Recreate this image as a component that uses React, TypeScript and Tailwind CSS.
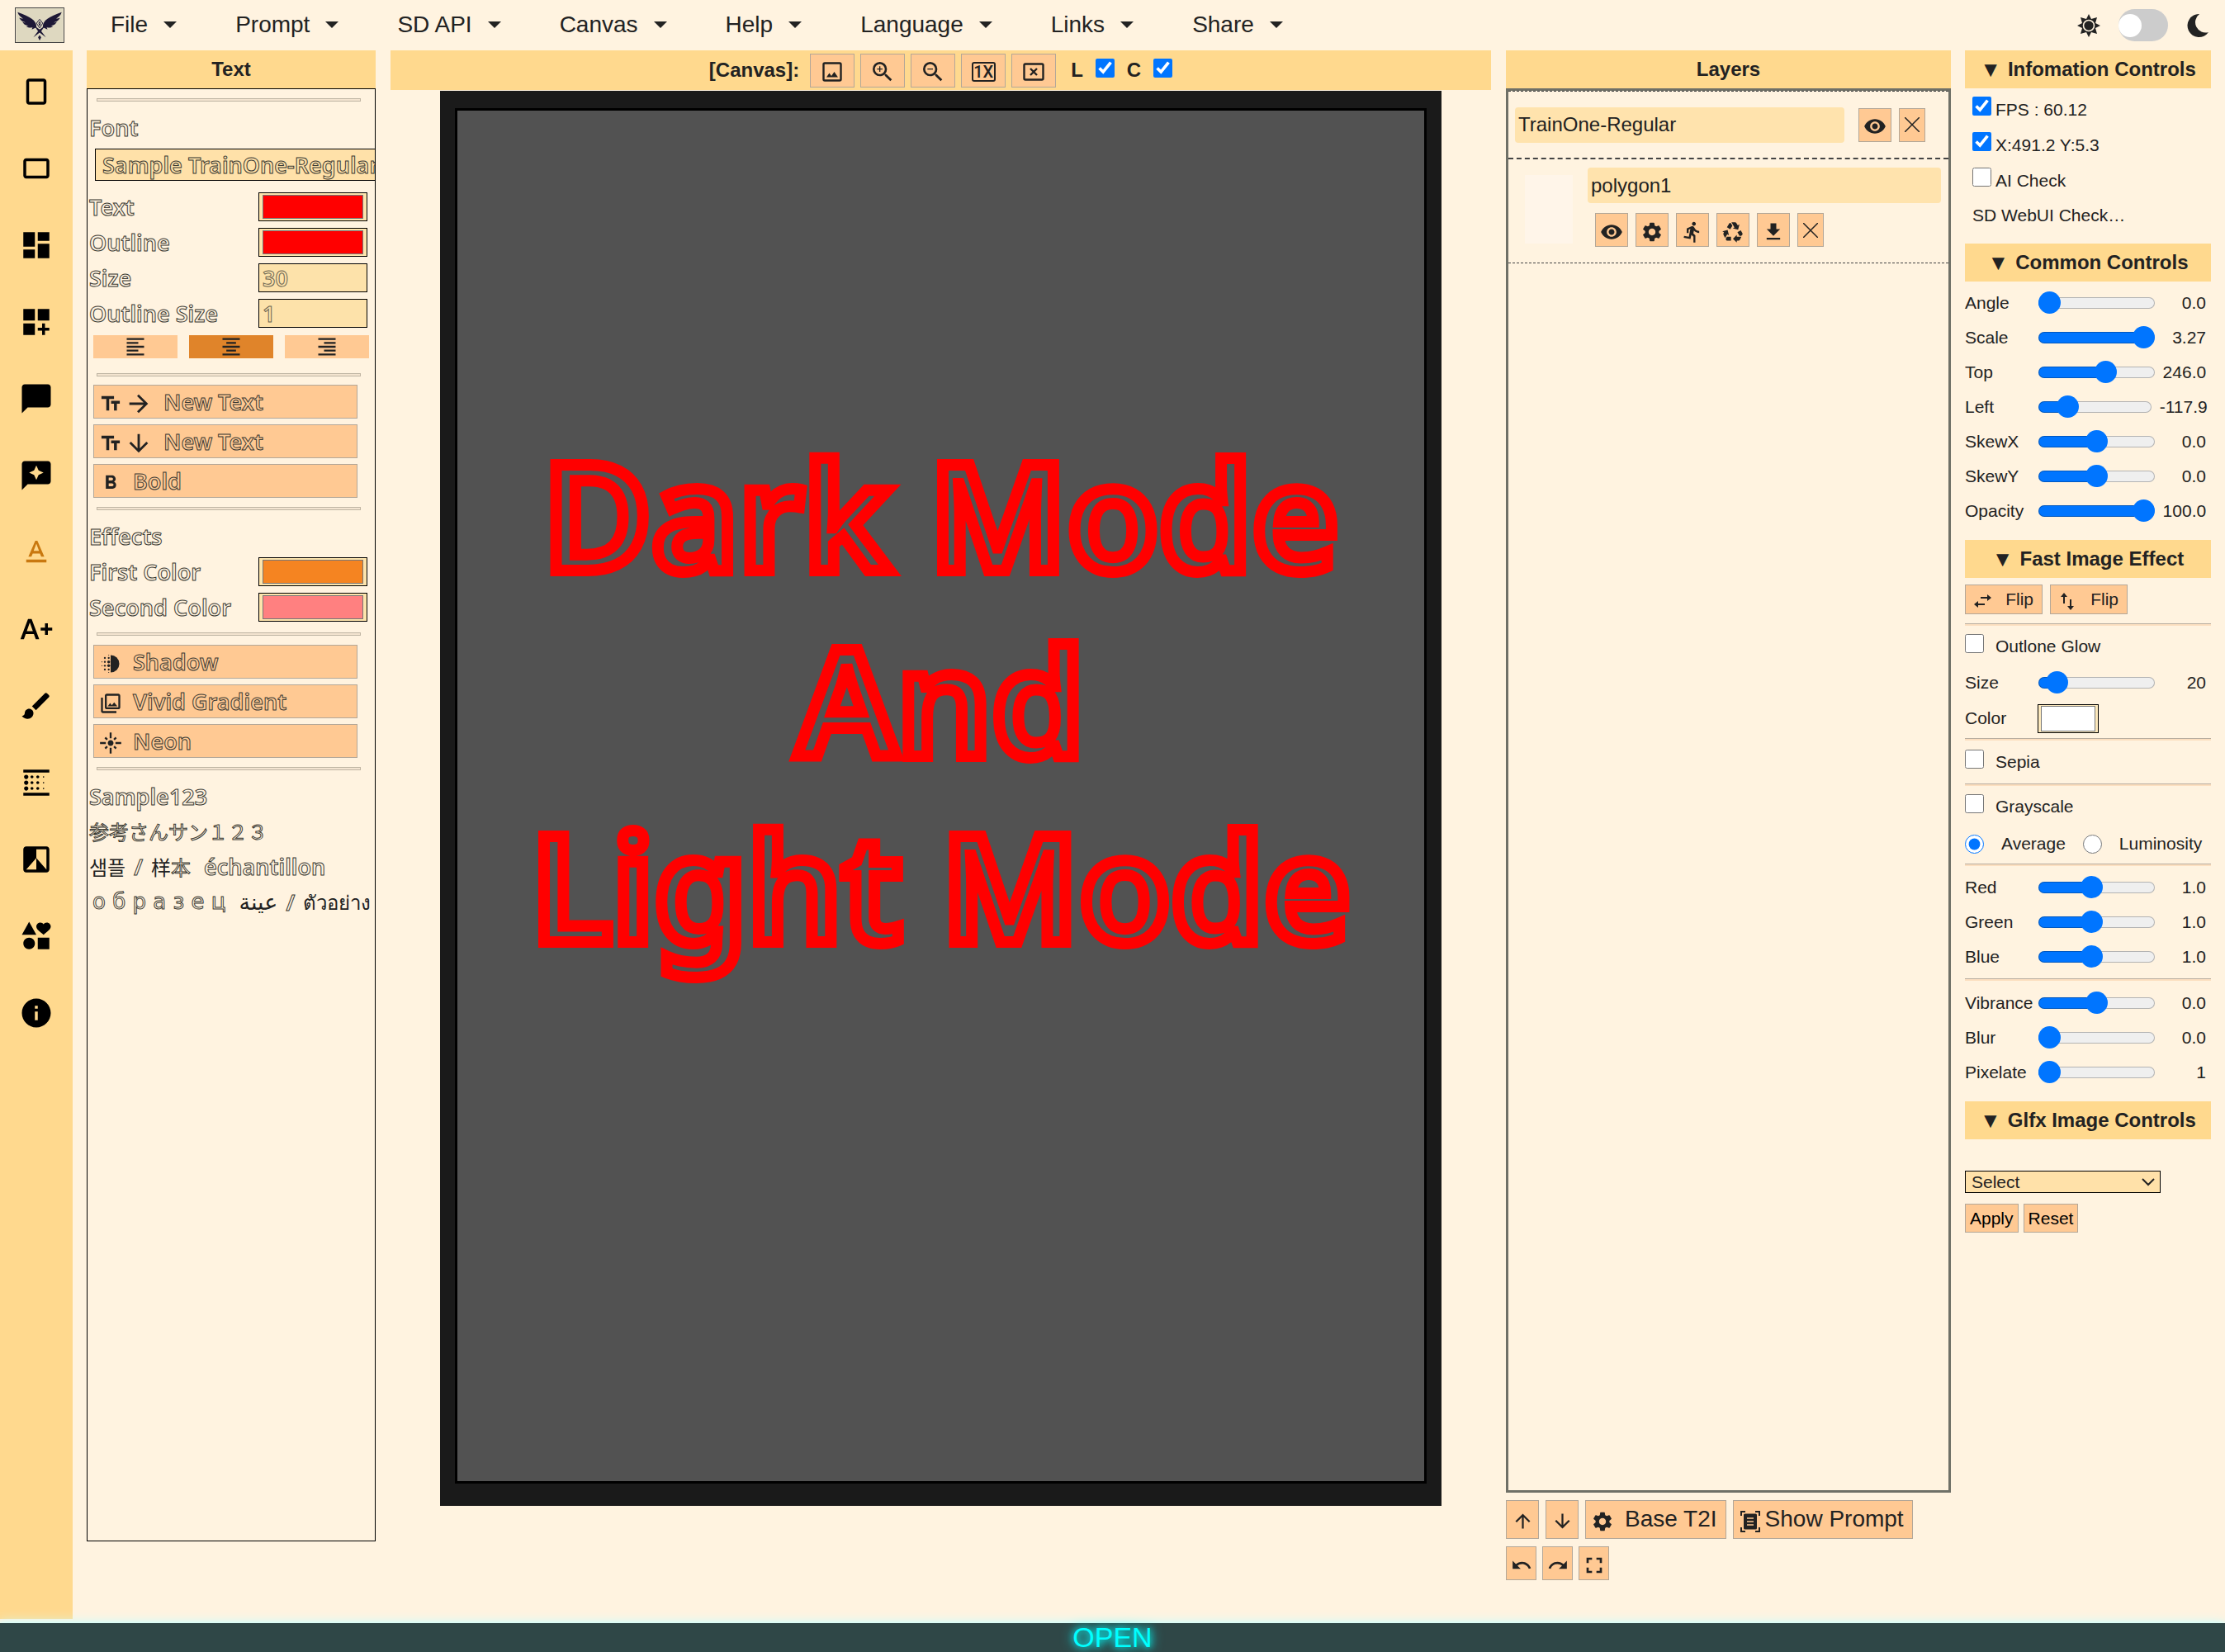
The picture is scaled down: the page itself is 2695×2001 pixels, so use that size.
import type { CSSProperties, ReactNode } from "react";
import type { IconType } from "react-icons";
import {
    MdArrowDownward,
    MdArrowForward,
    MdArrowUpward,
    MdBlurLinear,
    MdBrush,
    MdChatBubble,
    MdCropLandscape,
    MdCropPortrait,
    MdDashboard,
    MdDashboardCustomize,
    MdDeblur,
    MdDirectionsRun,
    MdDownload,
    MdFilterBAndW,
    MdFlare,
    MdFormatAlignCenter,
    MdFormatAlignLeft,
    MdFormatAlignRight,
    MdFormatBold,
    MdFullscreen,
    MdInfo,
    MdInterests,
    MdOutlinePhotoLibrary,
    MdRecycling,
    MdRedo,
    MdSettings,
    MdTextFields,
    MdTextFormat,
    MdTextIncrease,
    MdUndo,
    MdVisibility,
    MdZoomIn,
    MdZoomOut,
} from "react-icons/md";

const menus = ["File", "Prompt", "SD API", "Canvas", "Help", "Language", "Links", "Share"];

const outlineText =
    "font-['Noto_Sans','Noto_Sans_CJK_JP',sans-serif] text-[27px] font-semibold text-transparent [-webkit-text-stroke:1px_#3b3a33]";
const solidText = "text-[#222] [-webkit-text-stroke:0]";
const peachButton = "flex items-center border border-[#b3a798] bg-[#ffc993]";

function ChatSpark() {
    return (
        <svg viewBox="0 0 24 24" className="size-[42px]" fill="currentColor" aria-hidden="true">
            <path
                fillRule="evenodd"
                d="M20 2H4c-1.100 0-2 .9-2 2v18l4-4h14c1.100 0 2-.9 2-2V4c0-1.100-.9-2-2-2zm-6.430 9.570L12 15l-1.570-3.430L7 10l3.430-1.570L12 5l1.570 3.430L17 10z"
            />
        </svg>
    );
}

const tools: { label: string; icon: IconType | typeof ChatSpark; active?: boolean }[] = [
    { label: "Portrait", icon: MdCropPortrait },
    { label: "Landscape", icon: MdCropLandscape },
    { label: "Panels", icon: MdDashboard },
    { label: "Custom panels", icon: MdDashboardCustomize },
    { label: "Speech bubble", icon: MdChatBubble },
    { label: "Custom bubble", icon: ChatSpark },
    { label: "Text", icon: MdTextFormat, active: true },
    { label: "Extra text", icon: MdTextIncrease },
    { label: "Brush", icon: MdBrush },
    { label: "Tone", icon: MdBlurLinear },
    { label: "Contrast", icon: MdFilterBAndW },
    { label: "Shapes", icon: MdInterests },
    { label: "Info", icon: MdInfo },
];

function Logo() {
    return (
        <svg viewBox="0 0 60 43" className="h-[43px] w-[60px] border border-[#444]" role="img" aria-label="Logo">
            <rect width="60" height="43" fill="#ded8c0" />
            <g fill="#1d1836">
                <path d="M26 24C26 15 18 11 2 5c1 4 4 6 7 8-2 0-3 0-5-1 2 4 5 5 8 6-2 0-3 0-4-1 2 4 5 5 8 5l-3 1c3 2 6 2 8 1l-1 3z" />
                <path d="M34 24C34 15 42 11 58 5c-1 4-4 6-7 8 2 0 3 0 5-1-2 4-5 5-8 6 2 0 3 0 4-1-2 4-5 5-8 5l3 1c-3 2-6 2-8 1l1 3z" />
                <path d="M23 22l7 5 7-5-5 7 6 8-8-6-8 6 6-8zM30 34l2 3-2 4-2-4z" />
            </g>
            <path d="M30 14l4 5-4 6-4-6zM30 17l1 2-1 3-1-3z" fill="none" stroke="#1d1836" />
        </svg>
    );
}

function Sun() {
    return (
        <svg viewBox="0 0 28 28" className="size-7" fill="#222" aria-hidden="true">
            <path d="M14 0l3 6 7-2-2 7 6 3-6 3 2 7-7-2-3 6-3-6-7 2 2-7-6-3 6-3-2-7 7 2z" />
            <circle cx="14" cy="14" r="6.5" stroke="#fff3e0" strokeWidth="1.6" />
        </svg>
    );
}

function Moon() {
    return (
        <svg viewBox="0 0 28 28" className="size-7" fill="#222" aria-hidden="true">
            <path d="M16 0A14 14 0 1 0 27 22 12.5 12.5 0 0 1 16 0z" />
        </svg>
    );
}

function TitleBar({ children }: { children: ReactNode }) {
    return <h2 className="flex h-[46px] shrink-0 items-center justify-center bg-[#ffd98e] text-2xl font-bold">{children}</h2>;
}

function FoldTitle({ children }: { children: ReactNode }) {
    return (
        <TitleBar>
            <span className="mr-2 text-[26px]">▼</span>
            {children}
        </TitleBar>
    );
}

function Rule() {
    return <hr className="mr-[17px] ml-[11px] h-1 border border-[#bfb5a3] bg-[#f3e4d0]" />;
}

function ThinRule() {
    return <hr className="h-[3px] border-0 border-t border-[#b8ada0] bg-[#fcdfc0]" />;
}

function ColorRow({ id, label, value }: { id: string; label: string; value: string }) {
    return (
        <div className="flex items-center justify-between pr-[9px] pl-[2px]">
            <label htmlFor={id}>{label}</label>
            <input
                id={id}
                type="color"
                defaultValue={value}
                className="h-[35px] w-[132px] border border-black bg-[#fde4ac] px-1 py-0 [&::-webkit-color-swatch]:border-[#777] [&::-webkit-color-swatch-wrapper]:px-0 [&::-webkit-color-swatch-wrapper]:py-[2px]"
            />
        </div>
    );
}

function NumberRow({ id, label, value }: { id: string; label: string; value: string }) {
    return (
        <div className="flex items-center justify-between pr-[9px] pl-[2px]">
            <label htmlFor={id}>{label}</label>
            <input
                id={id}
                defaultValue={value}
                className="h-[35px] w-[132px] border border-black bg-[#fde2aa] px-1 [-webkit-text-stroke:1px_#6b6450]"
            />
        </div>
    );
}

function TextButton({ icon, children }: { icon: ReactNode; children: ReactNode }) {
    return (
        <button className={`${peachButton} h-[41px] gap-[13px] pl-[6px]`}>
            <span className="flex items-center gap-[3px] pt-1 text-[28px] text-[#222]">{icon}</span>
            <span>{children}</span>
        </button>
    );
}

function SliderRow({ label, value, fill }: { label: string; value: string; fill: number }) {
    const id = `slider-${label.toLowerCase()}`;
    const stop = `calc(13px + (100% - 27px) * ${fill / 100})`;
    return (
        <div className="flex h-[42px] items-center pr-[6px]">
            <label htmlFor={id} className="w-[89px] shrink-0">
                {label}
            </label>
            <input
                id={id}
                type="range"
                defaultValue={fill}
                style={{ "--stop": stop } as CSSProperties}
                className="h-[27px] w-[141px] min-w-0 appearance-none bg-transparent [&::-webkit-slider-runnable-track]:h-[14px] [&::-webkit-slider-runnable-track]:rounded-full [&::-webkit-slider-runnable-track]:bg-[linear-gradient(to_right,#0075ff_var(--stop),#efefef_var(--stop))] [&::-webkit-slider-runnable-track]:shadow-[inset_0_0_0_1px_#00000040] [&::-webkit-slider-thumb]:-mt-[7px] [&::-webkit-slider-thumb]:size-[27px] [&::-webkit-slider-thumb]:appearance-none [&::-webkit-slider-thumb]:rounded-full [&::-webkit-slider-thumb]:bg-[#0075ff]"
            />
            <output htmlFor={id} className="min-w-[62px] grow pl-[10px] text-right">
                {value}
            </output>
        </div>
    );
}

function CheckRow({ id, label, checked = false, gap }: { id: string; label: string; checked?: boolean; gap: "tight" | "wide" }) {
    return (
        <div className={gap === "tight" ? "flex h-[43px] items-center gap-[5px] pl-[9px]" : "flex h-[46px] items-center gap-[14px]"}>
            <input id={id} type="checkbox" defaultChecked={checked} className="mb-2 size-[23px] accent-[#0075ff]" />
            <label htmlFor={id}>{label}</label>
        </div>
    );
}

function LayerButton({ label, icon: Icon }: { label: string; icon: IconType }) {
    return (
        <button aria-label={label} className={`${peachButton} h-[41px] w-10 justify-center pt-1`}>
            <Icon className="size-7" />
        </button>
    );
}

function CloseButton({ label }: { label: string }) {
    return (
        <button aria-label={label} className={`${peachButton} h-[41px] w-8 justify-center`}>
            <svg viewBox="0 0 18 18" className="size-[18px]" stroke="#222" strokeWidth="1.5" aria-hidden="true">
                <path d="M0 0l18 18M18 0L0 18" />
            </svg>
        </button>
    );
}

function CanvasButton({ label, children }: { label: string; children: ReactNode }) {
    return (
        <button aria-label={label} className={`${peachButton} h-[41px] w-[54px] justify-center pt-1`}>
            {children}
        </button>
    );
}

function Header() {
    return (
        <header className="flex h-[61px] items-center pr-[19px] pl-[18px]">
            <Logo />
            <nav className="mb-[2px] ml-[56px] flex gap-[71px] text-[28px]">
                {menus.map((item) => (
                    <button key={item} className="flex items-center gap-[19px]">
                        {item}
                        <svg viewBox="0 0 16 8" className="h-2 w-4" fill="#222" aria-hidden="true">
                            <path d="M0 0h16L8 8z" />
                        </svg>
                    </button>
                ))}
            </nav>
            <div className="ml-auto flex items-center gap-[22px]">
                <Sun />
                <button role="switch" aria-checked="false" aria-label="Dark mode" className="flex h-[39px] w-[60px] items-center rounded-full bg-[#ccc]">
                    <span className="size-7 rounded-full bg-white" />
                </button>
                <Moon />
            </div>
        </header>
    );
}

function Toolbar() {
    return (
        <aside className="mb-[5px] flex w-[88px] shrink-0 flex-col items-center gap-[51px] bg-[#ffd98e] pt-[29px] text-black">
            {tools.map(({ label, icon: Icon, active }) => (
                <button key={label} aria-label={label} className={active ? "text-[42px] text-[#c9780f]" : "text-[42px]"}>
                    <Icon />
                </button>
            ))}
        </aside>
    );
}

function TextPanel() {
    return (
        <section className="mb-[99px] flex w-[350px] shrink-0 flex-col">
            <TitleBar>Text</TitleBar>
            <div className={`flex grow flex-col overflow-hidden border border-black pt-[11px] leading-[34px] ${outlineText}`}>
                <Rule />
                <p className="mt-[15px] pl-[2px]">Font</p>
                <input
                    aria-label="Font"
                    defaultValue="Sample TrainOne-Regular"
                    className="mt-2 ml-[9px] h-[39px] w-[380px] shrink-0 border border-black bg-[#ffe1a9] px-2"
                />
                <div className="mt-[14px] flex flex-col gap-[8px]">
                    <ColorRow id="text-color" label="Text" value="#ff0000" />
                    <ColorRow id="outline-color" label="Outline" value="#ff0000" />
                    <NumberRow id="text-size" label="Size" value="30" />
                    <NumberRow id="outline-size" label="Outline Size" value="1" />
                </div>
                <div className="mt-[9px] mr-[7px] mb-[18px] ml-[7px] flex gap-[14px] text-[#222]">
                    <button aria-label="Align left" className="flex h-7 grow items-center justify-center bg-[#ffc993]">
                        <MdFormatAlignLeft className="size-7" />
                    </button>
                    <button aria-label="Align center" className="flex h-7 grow items-center justify-center bg-[#e0842a]">
                        <MdFormatAlignCenter className="size-7" />
                    </button>
                    <button aria-label="Align right" className="flex h-7 grow items-center justify-center bg-[#ffc993]">
                        <MdFormatAlignRight className="size-7" />
                    </button>
                </div>
                <Rule />
                <div className="mt-[10px] mr-[21px] mb-[11px] ml-[7px] flex flex-col gap-[7px]">
                    <TextButton icon={<><MdTextFields /><MdArrowForward className="size-[34px]" /></>}>New Text</TextButton>
                    <TextButton icon={<><MdTextFields /><MdArrowDownward className="size-[34px]" /></>}>New Text</TextButton>
                    <TextButton icon={<MdFormatBold />}>Bold</TextButton>
                </div>
                <Rule />
                <p className="mt-[15px] mb-[8px] pl-[2px]">Effects</p>
                <div className="mb-[13px] flex flex-col gap-[8px]">
                    <ColorRow id="first-color" label="First Color" value="#f58421" />
                    <ColorRow id="second-color" label="Second Color" value="#ff8080" />
                </div>
                <Rule />
                <div className="my-[11px] mr-[21px] ml-[7px] flex flex-col gap-[7px]">
                    <TextButton icon={<MdDeblur />}>Shadow</TextButton>
                    <TextButton icon={<MdOutlinePhotoLibrary />}>Vivid Gradient</TextButton>
                    <TextButton icon={<MdFlare />}>Neon</TextButton>
                </div>
                <Rule />
                <div className="mt-[10px] flex flex-col pl-[2px] leading-[43px] whitespace-nowrap">
                    <p>Sample123</p>
                    <p className="font-['Noto_Sans_CJK_JP',sans-serif] text-2xl leading-[42px] font-normal">参考さんサン１２３</p>
                    <p className="flex gap-[10px]">
                        <span className={`font-['Noto_Sans_CJK_KR',sans-serif] text-2xl leading-[43px] font-normal ${solidText}`}>샘플</span>
                        <span>/</span>
                        <span className="mr-[6px] font-['Noto_Sans_CJK_SC',sans-serif] text-2xl leading-[43px] font-normal">
                            <span className={solidText}>样</span>本
                        </span>
                        <span>échantillon</span>
                    </p>
                    <p className="flex gap-[10px] pl-1">
                        <span className="mr-[6px] font-['DejaVu_Sans',sans-serif] text-[26px] leading-[43px] font-normal">о б р а з е ц</span>
                        <span className={`font-['DejaVu_Sans',sans-serif] font-normal ${solidText}`}>عينة</span>
                        <span>/</span>
                        <span className={`text-2xl leading-[43px] font-normal ${solidText}`}>ตัวอย่าง</span>
                    </p>
                </div>
            </div>
        </section>
    );
}

function CanvasArea() {
    return (
        <main className="mr-px mb-[142px] ml-px flex min-w-0 grow flex-col">
            <div className="flex h-12 items-center justify-center gap-[7px] bg-[#ffd98e] text-2xl font-bold">
                <span className="mr-[6px]">[Canvas]:</span>
                <CanvasButton label="Save image">
                    <svg viewBox="0 0 24 24" className="size-6" aria-hidden="true">
                        <rect x="1.5" y="1.5" width="21" height="21" rx="1.5" fill="none" stroke="#222" strokeWidth="2.4" />
                        <path d="M5 18.5l3.5-5 2.5 3.5 3.500-5 4.500 6.500z" fill="#222" />
                    </svg>
                </CanvasButton>
                <CanvasButton label="Zoom in"><MdZoomIn className="size-8" /></CanvasButton>
                <CanvasButton label="Zoom out"><MdZoomOut className="size-8" /></CanvasButton>
                <CanvasButton label="Actual size">
                    <span className="flex h-6 w-[29px] items-center justify-center rounded-[3px] border-2 border-[#222] font-[Roboto,sans-serif] text-xl font-medium">1X</span>
                </CanvasButton>
                <CanvasButton label="Clear">
                    <svg viewBox="0 0 26 22" className="h-[22px] w-[26px]" fill="none" stroke="#222" strokeWidth="2.4" aria-hidden="true">
                        <rect x="1.5" y="1.5" width="23" height="19" rx="1.5" />
                        <path d="M9 7l8 8M17 7l-8 8" />
                    </svg>
                </CanvasButton>
                <label htmlFor="layer-check" className="ml-[11px]">L</label>
                <input id="layer-check" type="checkbox" defaultChecked className="mx-[8px] mb-[5px] size-[23px] accent-[#0075ff]" />
                <label htmlFor="control-check">C</label>
                <input id="control-check" type="checkbox" defaultChecked className="mb-[5px] ml-[8px] size-[23px] accent-[#0075ff]" />
            </div>
            <div className="mx-[60px] mt-px flex grow border-x-[18px] border-t-[21px] border-b-[27px] border-[#1a1a1a] bg-[#525252]">
                <div className="grow border-[3px] border-black pt-[375px] text-center font-['Noto_Sans',sans-serif] text-[180px] leading-[225px] font-semibold text-[#525252] [-webkit-text-stroke:14px_red]">
                    <p>Dark Mode</p>
                    <p>And</p>
                    <p>Light Mode</p>
                </div>
            </div>
        </main>
    );
}

function LayersPanel() {
    return (
        <section className="mb-[52px] flex w-[539px] shrink-0 flex-col">
            <TitleBar>Layers</TitleBar>
            <div className="grow border-[3px] border-[#6f7067]">
                <div className="flex h-[83px] items-center border-t border-b-2 border-dashed border-[#444] pl-2">
                    <input aria-label="Text layer name" defaultValue="TrainOne-Regular" className="h-[43px] w-[399px] rounded-sm bg-[#ffe3ad] px-1 text-2xl" />
                    <div className="ml-[17px] flex gap-[9px]">
                        <LayerButton label="Toggle visibility" icon={MdVisibility} />
                        <CloseButton label="Delete layer" />
                    </div>
                </div>
                <div className="flex border-b border-dashed border-[#444] pt-[10px] pr-[9px] pb-[19px]">
                    <div className="mt-[9px] mr-[18px] ml-5 h-[83px] w-[58px] bg-[#fff5e9]" />
                    <div className="grow">
                        <input aria-label="Panel layer name" defaultValue="polygon1" className="h-[43px] w-full rounded-sm bg-[#ffe3ad] px-1 text-2xl" />
                        <div className="mt-3 ml-[9px] flex gap-[9px]">
                            <LayerButton label="Toggle visibility" icon={MdVisibility} />
                            <LayerButton label="Settings" icon={MdSettings} />
                            <LayerButton label="Run" icon={MdDirectionsRun} />
                            <LayerButton label="Seed" icon={MdRecycling} />
                            <LayerButton label="Download" icon={MdDownload} />
                            <CloseButton label="Delete panel" />
                        </div>
                    </div>
                </div>
            </div>
            <div className="mt-[9px] flex gap-2 text-[28px]">
                <button aria-label="Move up" className={`${peachButton} h-[47px] w-10 justify-center pt-1`}><MdArrowUpward className="size-[27px]" /></button>
                <button aria-label="Move down" className={`${peachButton} h-[47px] w-10 justify-center pt-1`}><MdArrowDownward className="size-[27px]" /></button>
                <button className={`${peachButton} h-[47px] gap-[13px] pr-[10px] pb-[2px] pl-[6px]`}>
                    <MdSettings className="mt-[6px] size-7" />
                    Base T2I
                </button>
                <button className={`${peachButton} h-[47px] gap-[6px] pr-[10px] pb-[2px] pl-2`}>
                    <svg viewBox="0 0 24 26" className="mt-[6px] h-[26px] w-6" aria-hidden="true">
                        <path d="M1 6V1h5M18 1h5v5M1 20v5h5M18 25h5v-5" fill="none" stroke="#222" strokeWidth="2" />
                        <rect x="4" y="3.5" width="16" height="19" rx="1.5" fill="#222" />
                        <path d="M8 9h8M8 13h8M8 17h8" stroke="#ffc993" strokeWidth="1.5" />
                    </svg>
                    Show Prompt
                </button>
            </div>
            <div className="mt-[9px] flex gap-[7px]">
                <button aria-label="Undo" className={`${peachButton} h-[41px] w-[37px] justify-center pt-1`}><MdUndo className="size-[26px]" /></button>
                <button aria-label="Redo" className={`${peachButton} h-[41px] w-[37px] justify-center pt-1`}><MdRedo className="size-[26px]" /></button>
                <button aria-label="Full screen" className={`${peachButton} h-[41px] w-[37px] justify-center pt-1`}><MdFullscreen className="size-8" /></button>
            </div>
        </section>
    );
}

function ControlsPanel() {
    return (
        <aside className="w-[298px] shrink-0 text-[21px]">
            <FoldTitle>Infomation Controls</FoldTitle>
            <div className="pt-[4px] pb-[13px]">
                <CheckRow id="fps" label="FPS : 60.12" checked gap="tight" />
                <CheckRow id="position" label="X:491.2 Y:5.3" checked gap="tight" />
                <CheckRow id="ai" label="AI Check" gap="tight" />
                <p className="pl-[9px] leading-[42px]">SD WebUI Check…</p>
            </div>

            <FoldTitle>Common Controls</FoldTitle>
            <div className="pt-[5px] pb-[14px]">
                <SliderRow label="Angle" value="0.0" fill={0} />
                <SliderRow label="Scale" value="3.27" fill={100} />
                <SliderRow label="Top" value="246.0" fill={60} />
                <SliderRow label="Left" value="-117.9" fill={20} />
                <SliderRow label="SkewX" value="0.0" fill={50} />
                <SliderRow label="SkewY" value="0.0" fill={50} />
                <SliderRow label="Opacity" value="100.0" fill={100} />
            </div>

            <FoldTitle>Fast Image Effect</FoldTitle>
            <div className="mt-2 mb-[11px] flex gap-[9px]">
                <button className={`${peachButton} h-9 w-[94px] justify-between px-[10px]`}>
                    <svg viewBox="0 0 21 16" className="mt-1 h-4 w-[21px]" fill="none" stroke="#222" strokeWidth="2" aria-hidden="true">
                        <path d="M8 4h12M13 12H2" />
                        <path d="M16 0l5 4-5 4zM5 8l-5 4 5 4z" fill="#222" stroke="none" />
                    </svg>
                    Flip
                </button>
                <button className={`${peachButton} h-9 w-[94px] justify-between pr-[10px] pl-3`}>
                    <svg viewBox="0 0 16 21" className="mt-1 h-[21px] w-4" fill="none" stroke="#222" strokeWidth="2" aria-hidden="true">
                        <path d="M4 13V2M12 8v11" />
                        <path d="M0 5l4-5 4 5zM8 16l4 5 4-5z" fill="#222" stroke="none" />
                    </svg>
                    Flip
                </button>
            </div>
            <ThinRule />
            <div className="py-[2px]">
                <CheckRow id="glow" label="Outlone Glow" gap="wide" />
                <SliderRow label="Size" value="20" fill={8} />
                <div className="flex h-[44px] items-center">
                    <label htmlFor="glow-color" className="w-[88px]">Color</label>
                    <input
                        id="glow-color"
                        type="color"
                        defaultValue="#ffffff"
                        className="h-[35px] w-[74px] border border-black bg-[#fde9bc] px-[3px] py-0 [&::-webkit-color-swatch]:border-[#777] [&::-webkit-color-swatch-wrapper]:px-0 [&::-webkit-color-swatch-wrapper]:py-px"
                    />
                </div>
            </div>
            <ThinRule />
            <div className="py-[3px]">
                <CheckRow id="sepia" label="Sepia" gap="wide" />
            </div>
            <ThinRule />
            <div className="py-[2px]">
                <CheckRow id="grayscale" label="Grayscale" gap="wide" />
                <div className="flex h-11 items-center">
                    <input id="average" type="radio" name="gray" defaultChecked className="size-[23px] accent-[#0075ff]" />
                    <label htmlFor="average" className="ml-[21px]">Average</label>
                    <input id="luminosity" type="radio" name="gray" className="ml-[21px] size-[23px] accent-[#0075ff]" />
                    <label htmlFor="luminosity" className="ml-[21px]">Luminosity</label>
                </div>
            </div>
            <ThinRule />
            <div className="py-[5px]">
                <SliderRow label="Red" value="1.0" fill={45} />
                <SliderRow label="Green" value="1.0" fill={45} />
                <SliderRow label="Blue" value="1.0" fill={45} />
            </div>
            <ThinRule />
            <div className="pt-[6px] pb-[14px]">
                <SliderRow label="Vibrance" value="0.0" fill={50} />
                <SliderRow label="Blur" value="0.0" fill={0} />
                <SliderRow label="Pixelate" value="1" fill={0} />
            </div>

            <FoldTitle>Glfx Image Controls</FoldTitle>
            <div className="relative mt-[38px] w-[237px]">
                <select aria-label="Effect" className="block h-[27px] w-full appearance-none border border-black bg-[#ffe1a9] pl-[7px] leading-none">
                    <option>Select</option>
                </select>
                <svg viewBox="0 0 16 10" className="pointer-events-none absolute top-[9px] right-[7px] h-[10px] w-4" fill="none" stroke="#222" strokeWidth="2" aria-hidden="true">
                    <path d="M1 1l7 7 7-7" />
                </svg>
            </div>
            <div className="mt-[13px] flex gap-[6px] text-black">
                <button className="h-[35px] border border-[#b3a798] bg-[#ffc993] px-[5px]">Apply</button>
                <button className="h-[35px] border border-[#b3a798] bg-[#ffc993] px-[5px]">Reset</button>
            </div>
        </aside>
    );
}

export default function App() {
    return (
        <div className="flex min-h-screen flex-col bg-[#fff3e0] font-['Liberation_Sans',Arial,sans-serif] text-[#222]">
            <Header />
            <div className="flex grow">
                <Toolbar />
                <div className="flex min-w-0 grow gap-[17px] px-[17px]">
                    <TextPanel />
                    <CanvasArea />
                    <LayersPanel />
                    <ControlsPanel />
                </div>
            </div>
            <footer className="z-10 flex h-[35px] items-center justify-center bg-[#2f4747] shadow-[0_0_16px_#ccffff,0_0_6px_#ccffff]">
                <button className="pb-[2px] text-[34px] leading-none text-[#00ffff] [text-shadow:0_0_8px_#00ffff,0_0_16px_#00ffff]">OPEN</button>
            </footer>
        </div>
    );
}
